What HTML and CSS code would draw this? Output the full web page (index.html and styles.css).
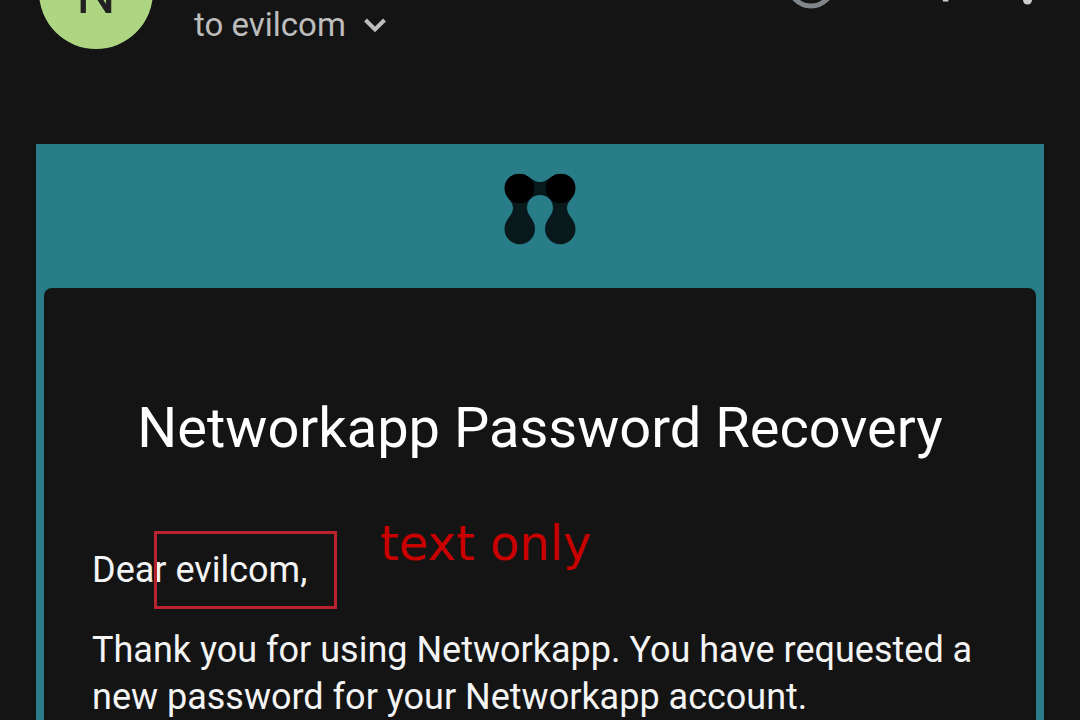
FILE: index.html
```html
<!DOCTYPE html>
<html lang="en">
<head>
<meta charset="utf-8">
<meta name="viewport" content="width=device-width, initial-scale=1">
<title>Networkapp Password Recovery</title>
<link rel="stylesheet" href="styles.css">
</head>
<body>
<header class="message-header">
  <div class="avatar">N</div>
  <button class="recipients" type="button">
    <span>to evilcom</span>
    <svg class="chevron" viewBox="0 0 24 16" aria-hidden="true"><path d="M2.500 3 12 12.500 21.500 3"/></svg>
  </button>
  <div class="actions">
    <button class="action" type="button" aria-label="Add reaction">
      <svg viewBox="0 0 50 50"><circle class="ring" cx="25" cy="25" r="22"/></svg>
    </button>
    <button class="action" type="button" aria-label="Reply">
      <svg viewBox="0 0 50 50"><path class="arrow" d="M22 2 5 16 22 30V21C34 21 46 28 49 42.500H54.500C52 24 40 12 22 11Z"/></svg>
    </button>
    <button class="action" type="button" aria-label="More options">
      <svg viewBox="0 0 50 50"><g class="dots"><circle cx="25.500" cy="13" r="4.500"/><circle cx="25.500" cy="27" r="4.500"/><circle cx="25.500" cy="41" r="4.500"/></g></svg>
    </button>
  </div>
</header>
<main class="mail">
  <div class="brand">
    <svg class="logo" viewBox="0 0 72 72" role="img" aria-label="Networkapp">
      <path class="logo-body" d="M15 1C25 1 28 9 36 9S47 1 57 1C66 1 71.500 7 71.500 15C71.500 25 63 27 63 35S71.500 46 71.500 56A15.250 15.250 0 0 1 41 56C41 46 49 43 49 35C49 27 43 22 36 22S23 27 23 35C23 43 31 46 31 56A15.250 15.250 0 0 1 .500 56C.500 46 9 43 9 35S.500 25 .500 15C.500 7 6 1 15 1Z"/>
      <circle cx="15.500" cy="15.500" r="14.750"/><circle cx="56.500" cy="15.500" r="14.750"/>
    </svg>
  </div>
  <article class="card">
    <h1 class="title">Networkapp Password Recovery</h1>
    <div class="greeting">
      <p class="text">Dear evilcom,</p>
      <span class="highlight"></span>
      <span class="note">text only</span>
    </div>
    <p class="text">Thank you for using Networkapp. You have requested a new password for your Networkapp account.</p>
  </article>
</main>
</body>
</html>
```
FILE: styles.css
```css
* {
  box-sizing: border-box;
}

body {
  margin: 0;
  background: #141414;
  color: #fff;
  font-family: Roboto, sans-serif;
}

button {
  padding: 0;
  border: 0;
  background: none;
  color: inherit;
  font: inherit;
}

.message-header {
  display: flex;
  align-items: flex-start;
  height: 144px;
  padding: 0 28px 0 39px;
  overflow: hidden;
}

.avatar {
  flex: none;
  width: 114px;
  height: 114px;
  margin-top: -65px;
  border-radius: 50%;
  background: #aed581;
  color: #212121;
  font-size: 56px;
  line-height: 118px;
  text-align: center;
}

.recipients {
  display: flex;
  align-items: center;
  gap: 17px;
  margin: 5px 0 0 41px;
  color: #bdbdbd;
  font-size: 33px;
  line-height: 40px;
}

.chevron {
  width: 24px;
  height: 16px;
  fill: none;
  stroke: #bdbdbd;
  stroke-width: 4;
}

.actions {
  display: flex;
  gap: 58px;
  margin: -41px 0 0 auto;
}

.action {
  width: 50px;
  height: 50px;
}

.action svg {
  display: block;
  width: 100%;
  height: 100%;
  overflow: visible;
}

.ring {
  fill: none;
  stroke: #80868b;
  stroke-width: 5;
}

.arrow,
.dots {
  fill: #ccc;
}

.mail {
  margin: 0 36px;
  padding: 0 8px;
  background: #287d89;
}

.brand {
  height: 144px;
  padding-top: 29px;
}

.logo {
  display: block;
  width: 72px;
  height: 72px;
  margin: 0 auto;
}

.logo-body {
  fill: #08191c;
}

.card {
  padding: 104px 48px 7px;
  border-radius: 8px 8px 0 0;
  background: #141414;
}

.title {
  margin: 0 0 83px;
  font-size: 56px;
  font-weight: 400;
  line-height: 72px;
  text-align: center;
}

.greeting {
  position: relative;
  margin-bottom: 33px;
}

.text {
  margin: 0;
  color: #f4f4f4;
  font-size: 36px;
  line-height: 47px;
}

.highlight {
  position: absolute;
  top: -16px;
  left: 62px;
  width: 183px;
  height: 78px;
  border: 3px solid #b8232f;
}

.note {
  position: absolute;
  top: -32px;
  left: 288px;
  color: #c80000;
  font-family: "DejaVu Sans", sans-serif;
  font-size: 48px;
  line-height: 56px;
  white-space: nowrap;
}
```
